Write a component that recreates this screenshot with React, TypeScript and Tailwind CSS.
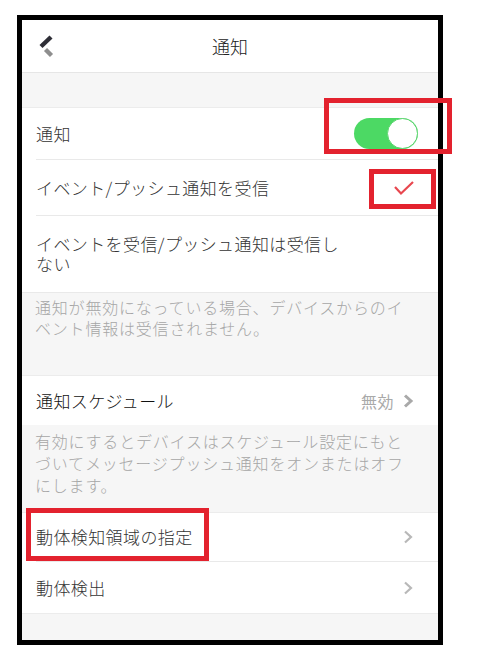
import React from "react";

const font = { fontFamily: '"Noto Sans CJK JP", "Noto Sans", sans-serif' };

function Chevron({ strong = false }: { strong?: boolean }) {
  return (
    <svg width="12" height="16" viewBox="0 0 12 16" className="shrink-0">
      <path
        d="M3 2.5 L9 8 L3 13.5"
        fill="none"
        stroke={strong ? "#a9a9a9" : "#b8b8b8"}
        strokeWidth={strong ? 3 : 2.2}
      />
    </svg>
  );
}

function Row({
  children,
  right,
  divider = true,
  className = "",
}: {
  children: React.ReactNode;
  right?: React.ReactNode;
  divider?: boolean;
  className?: string;
}) {
  return (
    <div className={`bg-white pl-[14px] ${className}`}>
      <div
        className={`flex h-full items-center justify-between pr-[24px] ${
          divider ? "border-b border-[#e9e9e9]" : ""
        }`}
      >
        <div className="text-[17px] font-light tracking-[0.4px] text-[#333]">{children}</div>
        {right}
      </div>
    </div>
  );
}

export default function App() {
  return (
    <div className="relative h-[666px] w-[490px] bg-white" style={font}>
      <div className="ml-[17px] pt-[15px]">
        <div className="flex h-[630px] w-[426px] flex-col overflow-hidden border-[5px] border-black bg-[#f6f6f6]">
          {/* header */}
          <div className="relative flex h-[53px] shrink-0 items-center justify-center border-b border-[#e6e6e6] bg-white">
            <svg width="20" height="26" viewBox="0 0 20 26" className="absolute left-[14px] top-[13px]">
              <line x1="15" y1="4" x2="5" y2="13.5" stroke="#2e2e36" strokeWidth="4.4" />
              <line x1="9.5" y1="16.5" x2="15.5" y2="22.5" stroke="#8e8e8e" strokeWidth="4.4" />
            </svg>
            <span className="text-[18px] font-light text-[#222]">通知</span>
          </div>

          <div className="h-[35px] shrink-0 border-b border-[#ececec]" />

          <Row
            className="h-[52px]"
            right={
              <div className="-mr-[4px] flex h-[31px] w-[64px] items-center justify-end rounded-full bg-[#4cd964]">
                <div className="h-[31px] w-[31px] rounded-full border border-[#5fd572] bg-white" />
              </div>
            }
          >
            通知
          </Row>

          <Row
            className="h-[56px]"
            right={
              <svg width="22" height="16" viewBox="0 0 22 16" className="-mr-[1px]">
                <path d="M2 7 L8 13.5 L20 2" fill="none" stroke="#e8474f" strokeWidth="2.2" />
              </svg>
            }
          >
            イベント/プッシュ通知を受信
          </Row>

          <Row className="h-[76px]" divider={false}>
            <div className="w-[312px] leading-[20px]">イベントを受信/プッシュ通知は受信しない</div>
          </Row>

          <div className="h-[83px] shrink-0 border-t border-[#e9e9e9] pl-[13px] pr-[20px] pt-[4px] text-[16px] font-light leading-[21px] tracking-[0.8px] text-[#a6a6a6]">
            通知が無効になっている場合、デバイスからのイベント情報は受信されません。
          </div>

          <Row
            className="h-[50px] border-t border-[#ececec]"
            divider={false}
            right={
              <div className="flex items-center gap-[8px] text-[16px] tracking-[0.5px] text-[#a9a9a9]">
                <span>無効</span>
                <Chevron strong />
              </div>
            }
          >
            <span className="text-[#111]">通知スケジュール</span>
          </Row>

          <div className="h-[87px] shrink-0 pl-[13px] pr-[20px] pt-[5px] text-[16px] font-light leading-[22px] tracking-[0.8px] text-[#a6a6a6]">
            有効にするとデバイスはスケジュール設定にもとづいてメッセージプッシュ通知をオンまたはオフにします。
          </div>

          <Row className="h-[50px] border-t border-[#ececec]" right={<Chevron />}>
            動体検知領域の指定
          </Row>

          <Row className="h-[51px]" divider={false} right={<Chevron />}>
            動体検出
          </Row>

          <div className="flex-1 border-t border-[#ececec]" />
        </div>
      </div>

      {/* annotation boxes */}
      <div className="pointer-events-none absolute left-[324px] top-[98px] h-[56px] w-[128px] border-[5px] border-[#e3222e]" />
      <div className="pointer-events-none absolute left-[369px] top-[169px] h-[40px] w-[67px] border-[5px] border-[#e3222e]" />
      <div className="pointer-events-none absolute left-[26px] top-[508px] h-[53px] w-[183px] border-[5px] border-[#e3222e]" />
    </div>
  );
}
